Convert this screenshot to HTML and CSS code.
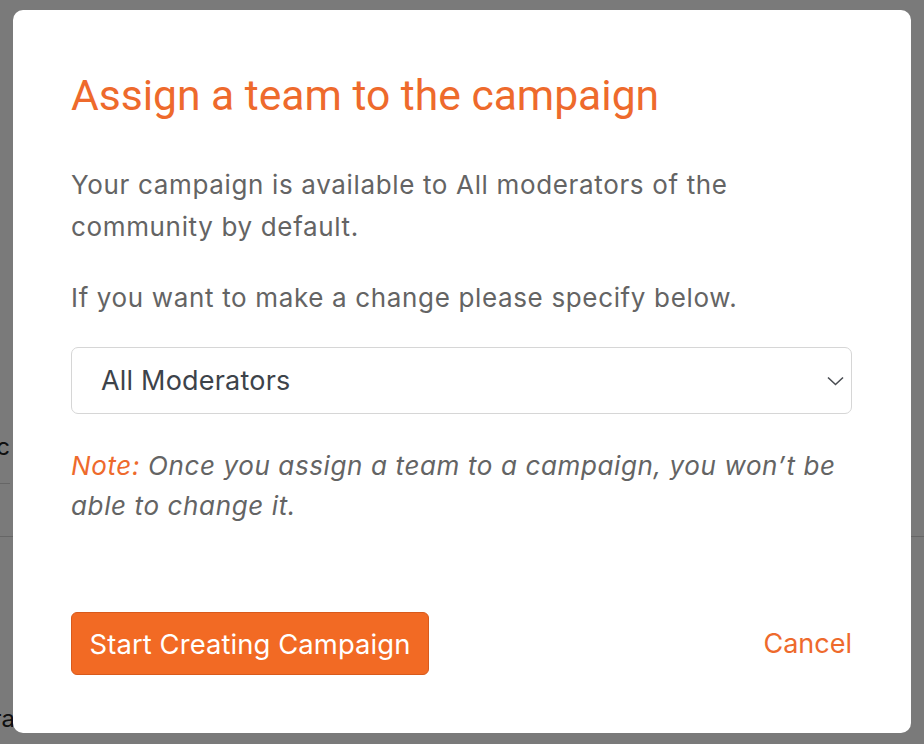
FILE: index.html
```html
<!DOCTYPE html>
<html>
<head>
<meta charset="utf-8">
<link rel="stylesheet" href="styles.css">
</head>
<body>
<div class="page">
  <div class="page-row"><span class="page-cell">Topic</span></div>
  <div class="page-row"></div>
  <div class="page-foot"><span class="page-cell">Libra</span></div>
</div>
<div class="overlay"></div>
<div class="modal">
  <h1 class="title">Assign a team to the campaign</h1>
  <p class="text">Your campaign is available to All moderators of the community by default.</p>
  <p class="text text-second">If you want to make a change please specify below.</p>
  <div class="select">
    <span class="select-value">All Moderators</span>
    <svg class="chevron" width="17" height="10" viewBox="0 0 17 10"><path d="M1 1.5 L8.5 8.5 L16 1.5" fill="none" stroke="#4a4d52" stroke-width="1.6"/></svg>
  </div>
  <p class="note"><span class="note-label">Note:</span> Once you assign a team to a campaign, you won’t be able to change it.</p>
  <div class="actions">
    <button class="btn-primary">Start Creating Campaign</button>
    <a class="btn-link">Cancel</a>
  </div>
</div>
</body>
</html>
```
FILE: styles.css
```css
html, body {
  margin: 0;
  padding: 0;
}
body {
  width: 924px;
  height: 744px;
  overflow: hidden;
  background: #ffffff;
  font-family: Inter, "Noto Sans", sans-serif;
  position: relative;
}
.page {
  padding-top: 431px;
}
.page-row {
  height: 52px;
  border-bottom: 1px solid #d6d6d6;
  width: 10px;
  display: flex;
  justify-content: flex-end;
  box-sizing: content-box;
}
.page-row:nth-child(2) {
  width: 100%;
}
.page-row .page-cell,
.page-foot .page-cell {
  font-size: 24px;
  line-height: 32px;
  color: #222;
  white-space: nowrap;
}
.page-foot {
  margin-top: 166px;
  width: 15px;
  display: flex;
  justify-content: flex-end;
}
.overlay {
  position: absolute;
  inset: 0;
  background: rgba(0, 0, 0, 0.52);
}
.modal {
  position: absolute;
  left: 13px;
  top: 10px;
  width: 898px;
  height: 723px;
  box-sizing: border-box;
  background: #fff;
  border-radius: 10px;
  padding: 59px 58px 0 58px;
  display: flex;
  flex-direction: column;
}
.title {
  margin: 0 0 43px 0;
  font-family: Roboto, Inter, sans-serif;
  font-size: 42.6px;
  font-weight: 400;
  line-height: 52px;
  color: #ee6a2c;
}
.text {
  margin: 0 0 29px 0;
  font-size: 26px;
  line-height: 42px;
  letter-spacing: 0.65px;
  color: #646464;
  padding-right: 40px;
}
.text-second {
  margin-bottom: 28px;
}
.select {
  height: 67px;
  box-sizing: border-box;
  border: 1px solid #d6d6d6;
  border-radius: 7px;
  display: flex;
  align-items: center;
  justify-content: space-between;
  padding: 0 0 0 29px;
  margin-right: 1px;
}
.select-value {
  font-size: 27px;
  letter-spacing: 0.2px;
  color: #3d434a;
}
.chevron {
  margin-right: 7px;
}
.note {
  margin: 32px 0 0 0;
  font-size: 26px;
  line-height: 40px;
  font-style: italic;
  letter-spacing: 0.62px;
  color: #646464;
}
.note-label {
  color: #ee6a2c;
}
.actions {
  margin-top: 86px;
  display: flex;
  align-items: center;
  justify-content: space-between;
}
.btn-primary {
  height: 63px;
  width: 358px;
  border: 1px solid #d85a1c;
  border-radius: 6px;
  background: #f26a24;
  color: #fff;
  font-family: Inter, "Noto Sans", sans-serif;
  font-size: 27.4px;
  letter-spacing: 0.1px;
  padding: 0;
}
.btn-link {
  font-size: 27px;
  color: #ee6a2c;
  margin-right: 1px;
}
```
